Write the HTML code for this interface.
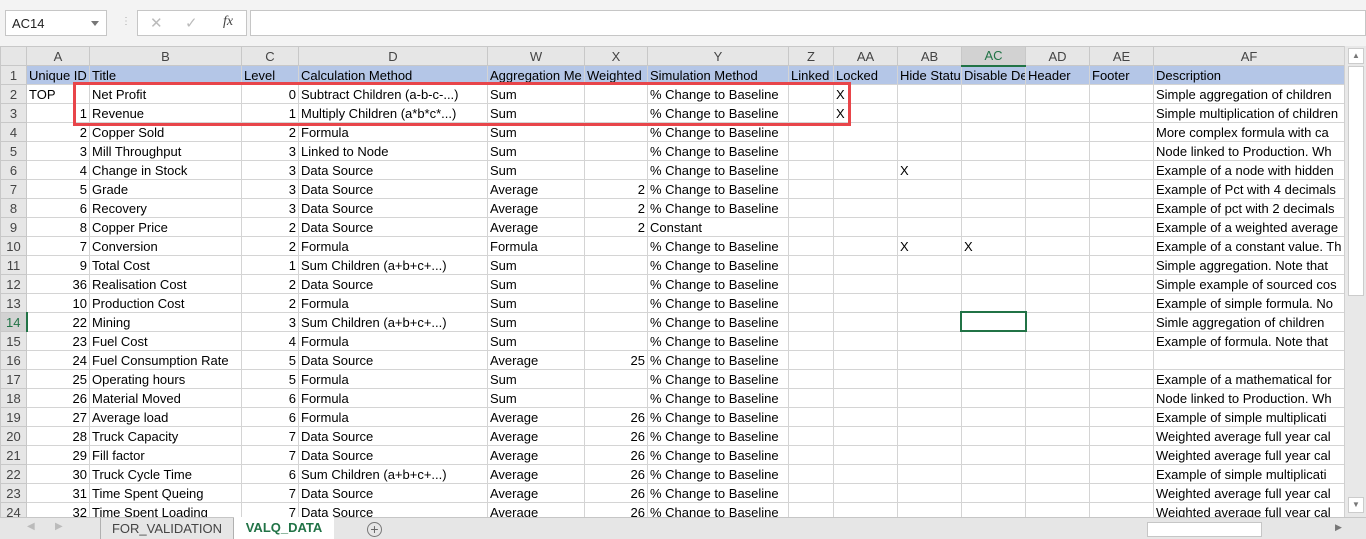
<!DOCTYPE html>
<html><head><meta charset="utf-8"><style>
*{margin:0;padding:0;box-sizing:border-box}
body{width:1366px;height:539px;overflow:hidden;background:#fff;font-family:"Liberation Sans",sans-serif;font-size:13px;color:#000;position:relative}
#top{position:absolute;left:0;top:0;width:1366px;height:46px;background:#f3f3f3}
.nb{position:absolute;left:5px;top:10px;width:102px;height:26px;background:#fff;border:1px solid #c6c6c6;font-size:13px;padding:5px 6px;color:#222}
.nb:after{content:"";position:absolute;right:7px;top:10px;border:4px solid transparent;border-top:5px solid #777}
.fx{position:absolute;left:137px;top:10px;width:110px;height:26px;background:#fff;border:1px solid #c6c6c6;color:#bbb}
.fi{position:absolute;left:250px;top:10px;width:1116px;height:26px;background:#fff;border:1px solid #c6c6c6}
table{position:absolute;left:0;top:46px;width:1344px;border-collapse:collapse;table-layout:fixed}
td{height:19px;border:1px solid #d4d4d4;white-space:nowrap;overflow:hidden;padding:0 2px;line-height:17px}
tr.h td{background:#e6e6e6;color:#444;text-align:center;border-color:#c8c8c8}
td.r{background:#e6e6e6;color:#444;text-align:center;border-color:#c8c8c8;padding:0}
tr.one td{background:#b4c6e7}
tr.one td.r{background:#e6e6e6}
.n{text-align:right}
#red{position:absolute;left:73px;top:82px;width:778px;height:44px;border:3px solid #e8454a}
#sel{position:absolute;left:960px;top:311px;width:67px;height:21px;border:2px solid #217346}
#vs{position:absolute;left:1344px;top:46px;width:22px;height:471px;background:#e8e8e8;border-left:1px solid #d0d0d0}
#tabs{position:absolute;left:0;top:517px;width:1366px;height:22px;background:#e6e6e6;border-top:1px solid #c6c6c6}
</style></head><body>
<div id="top">
<div class="nb">AC14</div>
<div style="position:absolute;left:121px;top:16px;color:#aaa;font-size:10px">⋮</div>
<div class="fx"><span style="position:absolute;left:12px;top:3px;font-size:15px">✕</span><span style="position:absolute;left:47px;top:3px;font-size:15px">✓</span><span style="position:absolute;left:85px;top:3px;color:#444;font-family:'Liberation Serif',serif;font-style:italic;font-size:14px">fx</span></div>
<div class="fi"></div>
</div>
<table>
<colgroup><col style="width:26px"><col style="width:63px"><col style="width:152px"><col style="width:57px"><col style="width:189px"><col style="width:97px"><col style="width:63px"><col style="width:141px"><col style="width:45px"><col style="width:64px"><col style="width:64px"><col style="width:64px"><col style="width:64px"><col style="width:64px"><col style="width:191px"></colgroup>
<tr class="h"><td style="background:#e6e6e6"></td><td>A</td><td>B</td><td>C</td><td>D</td><td>W</td><td>X</td><td>Y</td><td>Z</td><td>AA</td><td>AB</td><td style="background:#d2d2d2;color:#217346;border-bottom:2px solid #217346">AC</td><td>AD</td><td>AE</td><td>AF</td></tr>
<tr class="one"><td class="r">1</td><td>Unique ID</td><td>Title</td><td>Level</td><td>Calculation Method</td><td>Aggregation Me</td><td>Weighted</td><td>Simulation Method</td><td>Linked</td><td>Locked</td><td>Hide Statu</td><td>Disable De</td><td>Header</td><td>Footer</td><td>Description</td></tr>
<tr><td class="r">2</td><td>TOP</td><td>Net Profit</td><td class="n">0</td><td>Subtract Children (a-b-c-...)</td><td>Sum</td><td></td><td>% Change to Baseline</td><td></td><td>X</td><td></td><td></td><td></td><td></td><td>Simple aggregation of children</td></tr>
<tr><td class="r">3</td><td class="n">1</td><td>Revenue</td><td class="n">1</td><td>Multiply Children (a*b*c*...)</td><td>Sum</td><td></td><td>% Change to Baseline</td><td></td><td>X</td><td></td><td></td><td></td><td></td><td>Simple multiplication of children</td></tr>
<tr><td class="r">4</td><td class="n">2</td><td>Copper Sold</td><td class="n">2</td><td>Formula</td><td>Sum</td><td></td><td>% Change to Baseline</td><td></td><td></td><td></td><td></td><td></td><td></td><td>More complex formula with ca</td></tr>
<tr><td class="r">5</td><td class="n">3</td><td>Mill Throughput</td><td class="n">3</td><td>Linked to Node</td><td>Sum</td><td></td><td>% Change to Baseline</td><td></td><td></td><td></td><td></td><td></td><td></td><td>Node linked to Production. Wh</td></tr>
<tr><td class="r">6</td><td class="n">4</td><td>Change in Stock</td><td class="n">3</td><td>Data Source</td><td>Sum</td><td></td><td>% Change to Baseline</td><td></td><td></td><td>X</td><td></td><td></td><td></td><td>Example of a node with hidden</td></tr>
<tr><td class="r">7</td><td class="n">5</td><td>Grade</td><td class="n">3</td><td>Data Source</td><td>Average</td><td class="n">2</td><td>% Change to Baseline</td><td></td><td></td><td></td><td></td><td></td><td></td><td>Example of Pct with 4 decimals</td></tr>
<tr><td class="r">8</td><td class="n">6</td><td>Recovery</td><td class="n">3</td><td>Data Source</td><td>Average</td><td class="n">2</td><td>% Change to Baseline</td><td></td><td></td><td></td><td></td><td></td><td></td><td>Example of pct with 2 decimals</td></tr>
<tr><td class="r">9</td><td class="n">8</td><td>Copper Price</td><td class="n">2</td><td>Data Source</td><td>Average</td><td class="n">2</td><td>Constant</td><td></td><td></td><td></td><td></td><td></td><td></td><td>Example of a weighted average</td></tr>
<tr><td class="r">10</td><td class="n">7</td><td>Conversion</td><td class="n">2</td><td>Formula</td><td>Formula</td><td></td><td>% Change to Baseline</td><td></td><td></td><td>X</td><td>X</td><td></td><td></td><td>Example of a constant value. Th</td></tr>
<tr><td class="r">11</td><td class="n">9</td><td>Total Cost</td><td class="n">1</td><td>Sum Children (a+b+c+...)</td><td>Sum</td><td></td><td>% Change to Baseline</td><td></td><td></td><td></td><td></td><td></td><td></td><td>Simple aggregation. Note that</td></tr>
<tr><td class="r">12</td><td class="n">36</td><td>Realisation Cost</td><td class="n">2</td><td>Data Source</td><td>Sum</td><td></td><td>% Change to Baseline</td><td></td><td></td><td></td><td></td><td></td><td></td><td>Simple example of sourced cos</td></tr>
<tr><td class="r">13</td><td class="n">10</td><td>Production Cost</td><td class="n">2</td><td>Formula</td><td>Sum</td><td></td><td>% Change to Baseline</td><td></td><td></td><td></td><td></td><td></td><td></td><td>Example of simple formula. No</td></tr>
<tr><td class="r" style="color:#217346;background:#d2d2d2;border-right:2px solid #217346">14</td><td class="n">22</td><td>Mining</td><td class="n">3</td><td>Sum Children (a+b+c+...)</td><td>Sum</td><td></td><td>% Change to Baseline</td><td></td><td></td><td></td><td></td><td></td><td></td><td>Simle aggregation of children</td></tr>
<tr><td class="r">15</td><td class="n">23</td><td>Fuel Cost</td><td class="n">4</td><td>Formula</td><td>Sum</td><td></td><td>% Change to Baseline</td><td></td><td></td><td></td><td></td><td></td><td></td><td>Example of formula. Note that</td></tr>
<tr><td class="r">16</td><td class="n">24</td><td>Fuel Consumption Rate</td><td class="n">5</td><td>Data Source</td><td>Average</td><td class="n">25</td><td>% Change to Baseline</td><td></td><td></td><td></td><td></td><td></td><td></td><td></td></tr>
<tr><td class="r">17</td><td class="n">25</td><td>Operating hours</td><td class="n">5</td><td>Formula</td><td>Sum</td><td></td><td>% Change to Baseline</td><td></td><td></td><td></td><td></td><td></td><td></td><td>Example of a mathematical for</td></tr>
<tr><td class="r">18</td><td class="n">26</td><td>Material Moved</td><td class="n">6</td><td>Formula</td><td>Sum</td><td></td><td>% Change to Baseline</td><td></td><td></td><td></td><td></td><td></td><td></td><td>Node linked to Production. Wh</td></tr>
<tr><td class="r">19</td><td class="n">27</td><td>Average load</td><td class="n">6</td><td>Formula</td><td>Average</td><td class="n">26</td><td>% Change to Baseline</td><td></td><td></td><td></td><td></td><td></td><td></td><td>Example of simple multiplicati</td></tr>
<tr><td class="r">20</td><td class="n">28</td><td>Truck Capacity</td><td class="n">7</td><td>Data Source</td><td>Average</td><td class="n">26</td><td>% Change to Baseline</td><td></td><td></td><td></td><td></td><td></td><td></td><td>Weighted average full year cal</td></tr>
<tr><td class="r">21</td><td class="n">29</td><td>Fill factor</td><td class="n">7</td><td>Data Source</td><td>Average</td><td class="n">26</td><td>% Change to Baseline</td><td></td><td></td><td></td><td></td><td></td><td></td><td>Weighted average full year cal</td></tr>
<tr><td class="r">22</td><td class="n">30</td><td>Truck Cycle Time</td><td class="n">6</td><td>Sum Children (a+b+c+...)</td><td>Average</td><td class="n">26</td><td>% Change to Baseline</td><td></td><td></td><td></td><td></td><td></td><td></td><td>Example of simple multiplicati</td></tr>
<tr><td class="r">23</td><td class="n">31</td><td>Time Spent Queing</td><td class="n">7</td><td>Data Source</td><td>Average</td><td class="n">26</td><td>% Change to Baseline</td><td></td><td></td><td></td><td></td><td></td><td></td><td>Weighted average full year cal</td></tr>
<tr><td class="r">24</td><td class="n">32</td><td>Time Spent Loading</td><td class="n">7</td><td>Data Source</td><td>Average</td><td class="n">26</td><td>% Change to Baseline</td><td></td><td></td><td></td><td></td><td></td><td></td><td>Weighted average full year cal</td></tr>
</table>
<div id="red"></div>
<div id="sel"></div>
<div id="vs">
<div style="position:absolute;left:3px;top:2px;width:16px;height:16px;background:#fff;border:1px solid #ccc;color:#777;font-size:8px;text-align:center;line-height:14px">▲</div>
<div style="position:absolute;left:3px;top:20px;width:16px;height:230px;background:#fff;border:1px solid #ccc"></div>
<div style="position:absolute;left:3px;top:451px;width:16px;height:16px;background:#fff;border:1px solid #ccc;color:#777;font-size:8px;text-align:center;line-height:14px">▼</div>
</div>
<div id="tabs">
<span style="position:absolute;left:27px;top:3px;color:#bbb;font-size:10px">◀</span>
<span style="position:absolute;left:55px;top:3px;color:#bbb;font-size:10px">▶</span>
<div style="position:absolute;left:100px;top:0;width:134px;height:21px;border-left:1px solid #b0b0b0;border-right:1px solid #b0b0b0;text-align:center;line-height:21px;color:#444">FOR_VALIDATION</div>
<div style="position:absolute;left:234px;top:-1px;width:100px;height:22px;background:#fff;text-align:center;line-height:22px;color:#217346;font-weight:bold">VALQ_DATA</div>
<div style="position:absolute;left:367px;top:4px;width:15px;height:15px;border:1px solid #777;border-radius:50%;text-align:center;line-height:12px;color:#666;font-size:14px">+</div>
<div style="position:absolute;left:1147px;top:4px;width:115px;height:15px;background:#fff;border:1px solid #c6c6c6"></div>
<span style="position:absolute;left:1335px;top:4px;color:#777;font-size:9px">▶</span>
</div>
</body></html>
